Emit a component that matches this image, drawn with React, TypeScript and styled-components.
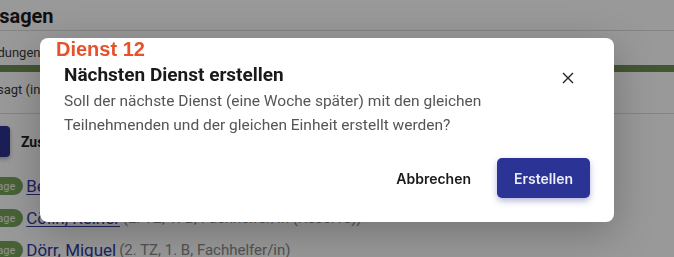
import styled, { createGlobalStyle } from "styled-components";

const GlobalStyle = createGlobalStyle`
  html, body {
    margin: 0;
    padding: 0;
    background: #ffffff;
    overflow: hidden;
  }
  body {
    font-family: Roboto, "Noto Sans", sans-serif;
    color: #1f1f1f;
  }
`;

const Page = styled.div`
  width: 760px;
  margin-left: -24px;
  display: flex;
  flex-direction: column;
  & > * {
    flex-shrink: 0;
  }
`;

const PageTitle = styled.h2`
  margin: 0;
  padding: 4px 0 0 0;
  height: 26px;
  font-size: 20px;
  font-weight: 700;
  line-height: 24px;
  color: #1c1c1c;
`;

const Divider = styled.div`
  height: 1px;
  background: #dcdcdc;
`;

const Spacer = styled.div<{ $h: number }>`
  height: ${(p) => p.$h}px;
`;

const Meta = styled.div<{ $indent?: number; $top?: number }>`
  font-size: 13px;
  line-height: 16px;
  color: #3a3a3a;
  margin-left: ${(p) => p.$indent ?? 0}px;
  margin-top: ${(p) => p.$top ?? 0}px;
`;

const Progress = styled.div`
  height: 7px;
  background: #718f54;
`;

const ActionRow = styled.div`
  display: flex;
  align-items: center;
  gap: 11px;
  margin-top: 12px;
`;

const SideButton = styled.div`
  width: 34px;
  height: 31px;
  background: #2e3590;
  border-radius: 4px;
  box-shadow: 0 2px 4px rgba(0, 0, 0, 0.3);
`;

const ActionLabel = styled.span`
  font-size: 14px;
  font-weight: 700;
  color: #222;
`;

const List = styled.div`
  display: flex;
  flex-direction: column;
  gap: 14px;
  margin-top: 20px;
`;

const Person = styled.div`
  display: flex;
  align-items: center;
  gap: 3px;
  height: 18px;
`;

const Badge = styled.span`
  display: inline-flex;
  align-items: center;
  height: 18px;
  padding: 0 8px;
  margin-left: -5px;
  border-radius: 9px;
  background: #76a35a;
  color: #f2f2f2;
  font-size: 11px;
`;

const NameLink = styled.a<{ $plain?: boolean }>`
  font-size: 17px;
  color: #323a9e;
  text-decoration: ${(p) => (p.$plain ? "none" : "underline")};
  text-underline-offset: 2px;
  cursor: pointer;
`;

const Detail = styled.span`
  font-size: 15px;
  color: #8a8a8a;
`;

const Backdrop = styled.div`
  position: fixed;
  inset: 0;
  background: rgba(0, 0, 0, 0.4);
`;

const Dialog = styled.div`
  position: fixed;
  left: 40px;
  top: 38px;
  width: 574px;
  box-sizing: border-box;
  padding: 24px;
  background: #ffffff;
  border-radius: 8px;
  box-shadow: 0 10px 40px rgba(0, 0, 0, 0.25);
  display: flex;
  flex-direction: column;
`;

const StoryTag = styled.span`
  position: absolute;
  left: 16px;
  top: 0;
  font-family: "Liberation Sans", Arial, sans-serif;
  font-size: 20px;
  font-weight: 700;
  line-height: 22px;
  color: #e5522b;
`;

const DialogHead = styled.div`
  display: flex;
  align-items: flex-start;
  justify-content: space-between;
`;

const DialogTitle = styled.h3`
  margin: 0;
  padding-top: 1px;
  font-size: 19px;
  font-weight: 700;
  line-height: 24px;
  color: #1a1a1a;
`;

const CloseButton = styled.button`
  width: 24px;
  height: 24px;
  margin-right: 10px;
  margin-top: 4px;
  border: none;
  background: transparent;
  display: flex;
  align-items: center;
  justify-content: center;
  cursor: pointer;
  padding: 0;
`;

const DialogText = styled.p`
  margin: -1px 0 0 0;
  font-size: 15.5px;
  line-height: 24px;
  color: #555555;
`;

const Footer = styled.div`
  display: flex;
  justify-content: flex-end;
  align-items: center;
  gap: 9px;
  margin-top: 21px;
`;

const Button = styled.button<{ $primary?: boolean }>`
  height: 40px;
  padding: 0 17px;
  border: none;
  border-radius: 5px;
  font-family: Inter, Roboto, sans-serif;
  font-size: 14px;
  font-weight: 600;
  cursor: pointer;
  background: ${(p) => (p.$primary ? "#2b3494" : "transparent")};
  color: ${(p) => (p.$primary ? "#ecedf7" : "#1a1a1a")};
  box-shadow: ${(p) => (p.$primary ? "0 3px 6px rgba(43, 52, 148, 0.35)" : "none")};
`;

export default function App() {
  return (
    <>
      <GlobalStyle />
      <Page>
        <PageTitle>Zusagen</PageTitle>
        <Divider />
        <Meta $top={14}>Meldungen: 14 von 20 Personen</Meta>
        <Spacer $h={4} />
        <Progress />
        <Meta $indent={-8} $top={10}>
          Zugesagt (inkl. Reserve): 14
        </Meta>
        <Spacer $h={15} />
        <Divider />
        <ActionRow>
          <SideButton />
          <ActionLabel>Zusagen verwalten</ActionLabel>
        </ActionRow>
        <List>
          <Person>
            <Badge>Zusage</Badge>
            <NameLink>Berger, Anna</NameLink>
            <Detail>(1. TZ, 2. B, Helfer/in)</Detail>
          </Person>
          <Person>
            <Badge>Zusage</Badge>
            <NameLink>Cölln, Reiner </NameLink>
            <Detail>(2. TZ, 1. B, Fachhelfer/in (Reserve))</Detail>
          </Person>
          <Person>
            <Badge>Zusage</Badge>
            <NameLink $plain>Dörr, Miguel</NameLink>
            <Detail>(2. TZ, 1. B, Fachhelfer/in)</Detail>
          </Person>
        </List>
      </Page>
      <Backdrop />
      <Dialog>
        <StoryTag>Dienst 12</StoryTag>
        <DialogHead>
          <DialogTitle>Nächsten Dienst erstellen</DialogTitle>
          <CloseButton aria-label="Schließen">
            <svg width="12" height="12" viewBox="0 0 12 12">
              <path d="M1 1L11 11M11 1L1 11" stroke="#222" strokeWidth="1.4" />
            </svg>
          </CloseButton>
        </DialogHead>
        <DialogText>
          Soll der nächste Dienst (eine Woche später) mit den gleichen
          <br />
          Teilnehmenden und der gleichen Einheit erstellt werden?
        </DialogText>
        <Footer>
          <Button>Abbrechen</Button>
          <Button $primary>Erstellen</Button>
        </Footer>
      </Dialog>
    </>
  );
}
